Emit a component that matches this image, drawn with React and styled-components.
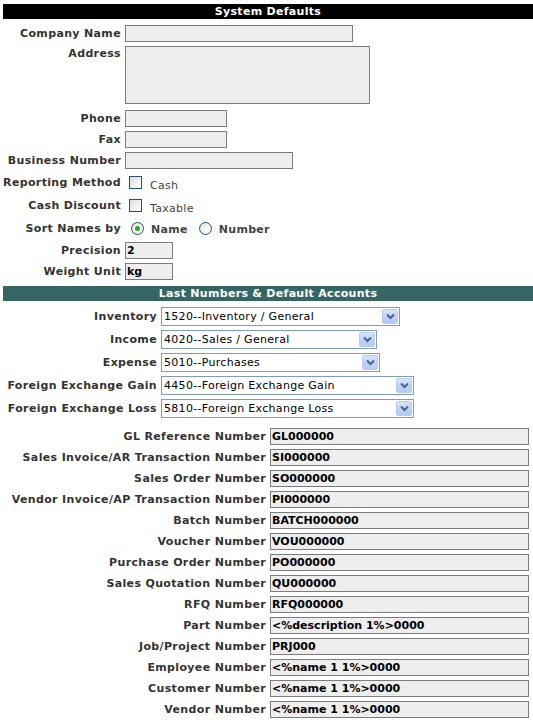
import React from "react";
import styled, { createGlobalStyle } from "styled-components";

const GlobalStyle = createGlobalStyle`
  body {
    margin: 0;
    background: #ffffff;
    font-family: "DejaVu Sans", Verdana, sans-serif;
    font-size: 11px;
  }
`;

const Page = styled.div`
  padding: 4px 0 0 3px;
  width: 530px;
`;

const SectionBar = styled.div`
  height: 15px;
  line-height: 15px;
  background: ${(p) => p.$bg};
  color: #ffffff;
  font-weight: bold;
  letter-spacing: 0.3px;
  text-align: center;
`;

const FormGrid = styled.div`
  display: grid;
  grid-template-columns: ${(p) => p.$labelWidth}px 1fr;
  column-gap: ${(p) => p.$gap || 4}px;
  row-gap: ${(p) => p.$rowGap}px;
  align-items: center;
  margin-top: ${(p) => p.$top}px;
`;

const Label = styled.div`
  text-align: right;
  font-weight: bold;
  color: #333333;
  letter-spacing: 0.35px;
  white-space: nowrap;
  align-self: ${(p) => (p.$top ? "start" : "center")};
  padding-top: ${(p) => (p.$top ? "1px" : "0")};
`;

const TextBox = styled.div`
  box-sizing: border-box;
  width: ${(p) => p.$w}px;
  height: ${(p) => p.$h || 17}px;
  background: #eeeeee;
  border: 1px solid #7c7c7c;
  font-weight: bold;
  color: #000000;
  line-height: 15px;
  padding-left: 1px;
  white-space: nowrap;
  overflow: hidden;
`;

const CheckRow = styled.div`
  display: flex;
  align-items: center;
  gap: 8px;
  padding-left: 4px;
  height: 19px;
`;

const CheckBox = styled.span`
  box-sizing: border-box;
  width: 13px;
  height: 13px;
  border: 1px solid #1c5180;
  background: linear-gradient(135deg, #dcdcd7 0%, #f3f3f0 60%, #ffffff 100%);
`;

const OptionText = styled.span`
  color: #444444;
  font-weight: ${(p) => (p.$bold ? "bold" : "normal")};
  letter-spacing: 0.3px;
  position: relative;
  top: ${(p) => (p.$drop ? "3px" : "1px")};
`;

const Radio = styled.span`
  box-sizing: border-box;
  width: 13px;
  height: 13px;
  border-radius: 50%;
  border: 1px solid #1c5180;
  background: radial-gradient(circle at 65% 65%, #ffffff 0%, #ececec 60%, #d4d4cf 100%);
  display: flex;
  align-items: center;
  justify-content: center;
  margin-left: ${(p) => p.$ml || 0}px;

  &::after {
    content: "";
    width: 5px;
    height: 5px;
    border-radius: 50%;
    background: ${(p) => (p.$checked ? "#2ca52c" : "transparent")};
  }
`;

const RadioGroup = styled.div`
  display: flex;
  align-items: center;
  gap: 7px;
  padding-left: 6px;
  height: 19px;
`;

const SelectBox = styled.div`
  box-sizing: border-box;
  width: ${(p) => p.$w}px;
  height: 19px;
  border: 1px solid #7f9db9;
  background: #ffffff;
  display: flex;
  align-items: center;
  justify-content: space-between;
  padding: 0 1px 0 2px;
  color: #000000;
  letter-spacing: 0.3px;
`;

const DropButton = styled.span`
  box-sizing: border-box;
  width: 16px;
  height: 15px;
  border: 1px solid #b9cbf3;
  border-radius: 2px;
  background: linear-gradient(180deg, #d8e4fc 0%, #c1d3fb 50%, #b4c9f6 100%);
  display: flex;
  align-items: center;
  justify-content: center;
`;

const Spacer = styled.div`
  height: ${(p) => p.$h}px;
`;

function Select({ value, width }) {
  return (
    <SelectBox $w={width}>
      <span>{value}</span>
      <DropButton>
        <svg width="9" height="7" viewBox="0 0 9 7">
          <path d="M1 1.5 L4.5 5 L8 1.5" fill="none" stroke="#4d6185" strokeWidth="2" />
        </svg>
      </DropButton>
    </SelectBox>
  );
}

const accounts = [
  ["Inventory", "1520--Inventory / General", 239],
  ["Income", "4020--Sales / General", 216],
  ["Expense", "5010--Purchases", 219],
  ["Foreign Exchange Gain", "4450--Foreign Exchange Gain", 253],
  ["Foreign Exchange Loss", "5810--Foreign Exchange Loss", 253],
];

const numbers = [
  ["GL Reference Number", "GL000000"],
  ["Sales Invoice/AR Transaction Number", "SI000000"],
  ["Sales Order Number", "SO000000"],
  ["Vendor Invoice/AP Transaction Number", "PI000000"],
  ["Batch Number", "BATCH000000"],
  ["Voucher Number", "VOU000000"],
  ["Purchase Order Number", "PO000000"],
  ["Sales Quotation Number", "QU000000"],
  ["RFQ Number", "RFQ000000"],
  ["Part Number", "<%description 1%>0000"],
  ["Job/Project Number", "PRJ000"],
  ["Employee Number", "<%name 1 1%>0000"],
  ["Customer Number", "<%name 1 1%>0000"],
  ["Vendor Number", "<%name 1 1%>0000"],
];

export default function App() {
  return (
    <Page>
      <GlobalStyle />
      <SectionBar $bg="#000000">System Defaults</SectionBar>

      <FormGrid $labelWidth={118} $rowGap={4} $top={6}>
        <Label>Company Name</Label>
        <TextBox $w={228} />
        <Label $top>Address</Label>
        <TextBox $w={245} $h={58} style={{ marginBottom: 2 }} />
        <Label>Phone</Label>
        <TextBox $w={102} />
        <Label>Fax</Label>
        <TextBox $w={102} />
        <Label>Business Number</Label>
        <TextBox $w={168} />
        <Label>Reporting Method</Label>
        <CheckRow>
          <CheckBox />
          <OptionText $drop>Cash</OptionText>
        </CheckRow>
        <Label>Cash Discount</Label>
        <CheckRow>
          <CheckBox />
          <OptionText $drop>Taxable</OptionText>
        </CheckRow>
        <Label>Sort Names by</Label>
        <RadioGroup>
          <Radio $checked />
          <OptionText $bold>Name</OptionText>
          <Radio $ml={4} />
          <OptionText $bold>Number</OptionText>
        </RadioGroup>
        <Label>Precision</Label>
        <TextBox $w={48}>2</TextBox>
        <Label>Weight Unit</Label>
        <TextBox $w={48}>kg</TextBox>
      </FormGrid>

      <Spacer $h={6} />
      <SectionBar $bg="#356663">Last Numbers &amp; Default Accounts</SectionBar>

      <FormGrid $labelWidth={154} $gap={4} $rowGap={4} $top={6}>
        {accounts.map(([label, value, width]) => (
          <React.Fragment key={label}>
            <Label>{label}</Label>
            <Select value={value} width={width} />
          </React.Fragment>
        ))}
      </FormGrid>

      <FormGrid $labelWidth={263} $gap={4} $rowGap={4} $top={10}>
        {numbers.map(([label, value]) => (
          <React.Fragment key={label}>
            <Label>{label}</Label>
            <TextBox $w={259}>{value}</TextBox>
          </React.Fragment>
        ))}
      </FormGrid>
    </Page>
  );
}
